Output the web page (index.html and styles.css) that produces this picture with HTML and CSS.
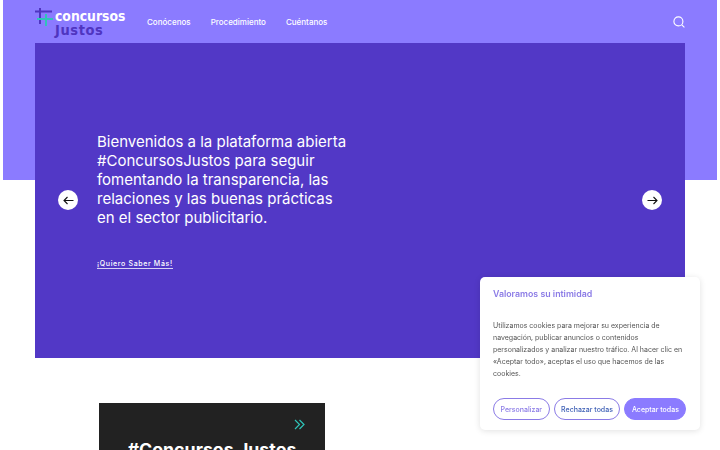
FILE: index.html
```html
<!DOCTYPE html>
<html lang="es">
<head>
  <meta charset="UTF-8">
  <title>Concursos Justos</title>
  <link rel="stylesheet" href="styles.css">
</head>
<body>
  <div class="band">
    <header class="topbar">
      <a class="logo" href="#">
        <svg class="logo-mark" width="18" height="18" viewBox="0 0 18 18">
          <rect x="4" y="0" width="2" height="16" fill="#4f35c0"/>
          <rect x="0" y="2.5" width="17" height="2" fill="#4f35c0"/>
          <rect x="10" y="6" width="2" height="12" fill="#2fc4b8"/>
          <rect x="2" y="10" width="16" height="2" fill="#2fc4b8"/>
        </svg>
        <span class="logo-text">
          <span class="logo-top">concursos</span>
          <span class="logo-bottom">Justos</span>
        </span>
      </a>
      <nav class="menu">
        <a href="#">Conócenos</a>
        <a href="#">Procedimiento</a>
        <a href="#">Cuéntanos</a>
      </nav>
      <button class="search-btn" aria-label="Buscar">
        <svg width="12" height="12" viewBox="0 0 12 12" fill="none" stroke="#fff" stroke-width="1.1">
          <circle cx="5.4" cy="5.4" r="4.5"/>
          <path d="M8.8 8.8 11.4 11.4"/>
        </svg>
      </button>
    </header>
  </div>

  <section class="hero">
    <button class="arrow" aria-label="Anterior">
      <svg width="11" height="9" viewBox="0 0 11 9" fill="none" stroke="#111" stroke-width="1.1">
        <path d="M10.5 4.5H1M4.5 1 1 4.5 4.5 8"/>
      </svg>
    </button>
    <div class="hero-copy">
      <h1>Bienvenidos a la plataforma abierta #ConcursosJustos para seguir fomentando la transparencia, las relaciones y las buenas prácticas en el sector publicitario.</h1>
      <a class="hero-link" href="#">¡Quiero Saber Más!</a>
    </div>
    <button class="arrow" aria-label="Siguiente">
      <svg width="11" height="9" viewBox="0 0 11 9" fill="none" stroke="#111" stroke-width="1.1">
        <path d="M.5 4.5H10M6.5 1 10 4.5 6.5 8"/>
      </svg>
    </button>
  </section>

  <section class="promo">
    <div class="promo-card">
      <svg class="chevrons" width="11" height="11" viewBox="0 0 11 11" fill="none" stroke="#2fc4b8" stroke-width="1.2">
        <path d="M1 1l4.5 4.5L1 10M5.5 1 10 5.5 5.5 10"/>
      </svg>
      <h2>#Concursos Justos</h2>
    </div>
  </section>

  <aside class="cookies">
    <h3>Valoramos su intimidad</h3>
    <p>Utilizamos cookies para mejorar su experiencia de navegación, publicar anuncios o contenidos personalizados y analizar nuestro tráfico. Al hacer clic en «Aceptar todo», aceptas el uso que hacemos de las cookies.</p>
    <div class="cookie-btns">
      <button class="btn btn-custom">Personalizar</button>
      <button class="btn btn-reject">Rechazar todas</button>
      <button class="btn btn-accept">Aceptar todas</button>
    </div>
  </aside>
</body>
</html>
```

FILE: styles.css
```css
html, body {
  height: 450px;
  overflow: hidden;
}
body {
  margin: 0;
  background: #fff;
  font-family: 'Inter', sans-serif;
}
a {
  color: inherit;
  text-decoration: none;
}
button {
  font-family: inherit;
  cursor: pointer;
}
.band {
  height: 180px;
  margin: 0 3px;
  padding: 0 32px;
  background: #8b7bff;
}
.topbar {
  display: flex;
  align-items: center;
  height: 43px;
}
.logo {
  display: flex;
  align-items: flex-start;
  gap: 2px;
  width: 112px;
}
.logo-mark {
  flex: none;
}
.logo-text {
  display: flex;
  flex-direction: column;
  margin-top: 2px;
  font-family: 'DejaVu Sans Condensed', 'DejaVu Sans', sans-serif;
  font-weight: 700;
  font-size: 13.8px;
  line-height: 12px;
}
.logo-top {
  color: #fff;
}
.logo-bottom {
  margin-top: 2px;
  color: #4f35c0;
  font-size: 14.5px;
  letter-spacing: .6px;
}
.menu {
  display: flex;
  gap: 20px;
  color: #fff;
  font-size: 8px;
  font-weight: 500;
}
.search-btn {
  margin-left: auto;
  padding: 0;
  display: flex;
  background: none;
  border: none;
}
.hero {
  display: flex;
  align-items: center;
  justify-content: space-between;
  height: 315px;
  margin: -137px 35px 0;
  padding: 0 23px;
  background: #5238c6;
  position: relative;
}
.arrow {
  flex: none;
  display: flex;
  align-items: center;
  justify-content: center;
  width: 20px;
  height: 20px;
  margin-bottom: 1px;
  padding: 0;
  border: none;
  border-radius: 50%;
  background: #fff;
}
.hero-copy {
  width: 256px;
  margin: 0 auto 0 19px;
  color: #fff;
}
.hero-copy h1 {
  margin: 0 0 23px;
  font-size: 15px;
  font-weight: 400;
  line-height: 19px;
}
.hero-link {
  font-size: 7px;
  font-weight: 500;
  letter-spacing: .65px;
  border-bottom: 1px solid #d8d2f5;
}
.promo {
  padding: 45px 0 0 99px;
}
.promo-card {
  width: 226px;
  height: 200px;
  padding-top: 16px;
  box-sizing: border-box;
  background: #222;
  color: #fff;
}
.chevrons {
  display: block;
  margin: 0 20px 0 auto;
}
.promo-card h2 {
  margin: 9px 0 0;
  text-align: center;
  font-size: 17.8px;
  font-weight: 700;
}
.cookies {
  position: fixed;
  left: 480px;
  top: 277px;
  width: 220px;
  height: 153px;
  padding: 11px 13px;
  box-sizing: border-box;
  background: #fff;
  border-radius: 5px;
  box-shadow: 0 1px 6px rgba(0, 0, 0, .12);
}
.cookies h3 {
  margin: 0 0 20px;
  color: #8b7be6;
  font-size: 8.8px;
  line-height: 12px;
  font-weight: 600;
}
.cookies p {
  margin: 0 0 18px;
  color: #555;
  font-size: 7px;
  line-height: 12px;
}
.cookie-btns {
  display: flex;
  gap: 4px;
  white-space: nowrap;
}
.btn {
  height: 22px;
  padding: 0 6.5px;
  font-size: 7px;
  font-weight: 500;
  border-radius: 11px;
  background: #fff;
}
.btn-custom {
  color: #8b7be6;
  border: 1px solid #8b7be6;
}
.btn-reject {
  color: #3d5fb5;
  border: 1px solid #8b7be6;
}
.btn-accept {
  color: #fff;
  background: #8b7bff;
  border: 1px solid #8b7bff;
}
```
